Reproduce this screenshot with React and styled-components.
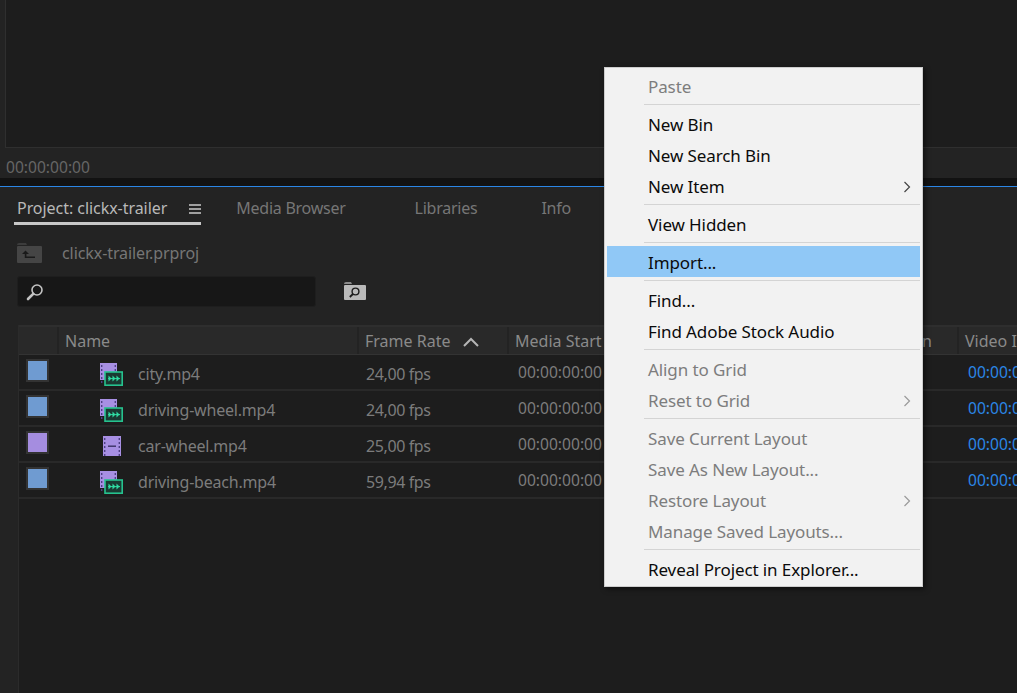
import React from "react";
import styled, { createGlobalStyle } from "styled-components";

const GlobalStyle = createGlobalStyle`
  html, body {
    margin: 0;
    padding: 0;
    background: #1d1d1d;
    overflow: hidden;
  }
  * {
    box-sizing: border-box;
  }
`;

const FONT = `"Noto Sans", "Open Sans", "Liberation Sans", sans-serif`;

const Page = styled.div`
  position: relative;
  width: 1017px;
  height: 693px;
  overflow: hidden;
  background: #232323;
  font-family: ${FONT};
  font-size: 16px;
  color: #8c8c8c;
`;

const Monitor = styled.div`
  height: 178px;
  padding-left: 5px;
  display: flex;
  flex-direction: column;
  background: #232323;
`;

const MonitorFrame = styled.div`
  height: 150px;
  background: #1d1d1d;
  border-left: 1px solid #2f2f2f;
  border-bottom: 1px solid #2f2f2f;
`;

const MonitorTime = styled.div`
  margin-top: 8px;
  padding-left: 1px;
  line-height: 22px;
  font-size: 15.6px;
  color: #666;
`;

const Divider = styled.div`
  height: 9px;
  background: #121212;
  border-bottom: 1px solid #2b86e6;
`;

const Panel = styled.div`
  height: 506px;
  display: flex;
  flex-direction: column;
`;

const Tabs = styled.div`
  height: 40px;
  padding-left: 14px;
  display: flex;
  align-items: flex-start;
`;

const Tab = styled.div`
  height: 38px;
  margin-left: ${(p) => p.$gap || 0}px;
  padding: 10px 0 0 ${(p) => (p.$active ? 3 : 0)}px;
  display: flex;
  line-height: 23px;
  letter-spacing: ${(p) => (p.$active ? -0.05 : -0.25)}px;
  color: ${(p) => (p.$active ? "#b8b8b8" : "#767676")};
  border-bottom: ${(p) => (p.$active ? "3px solid #c8c8c8" : "none")};
`;

const Burger = styled.div`
  width: 12px;
  height: 10px;
  margin: 7px 0 0 22px;
  border-top: 2px solid #a0a0a0;
  border-bottom: 2px solid #a0a0a0;
  position: relative;
  &::after {
    content: "";
    position: absolute;
    left: 0;
    right: 0;
    top: 2px;
    height: 2px;
    background: #a0a0a0;
  }
`;

const PathRow = styled.div`
  height: 40px;
  padding: 12px 0 0 17px;
  display: flex;
  align-items: center;
  gap: 20px;
  letter-spacing: -0.08px;
  color: #767676;
`;

const SearchRow = styled.div`
  height: 49px;
  margin-top: 9px;
  padding-left: 17px;
  display: flex;
  align-items: flex-start;
`;

const SearchBox = styled.div`
  width: 299px;
  height: 31px;
  padding-left: 8px;
  display: flex;
  align-items: center;
  background: #171717;
  border: 1px solid #1e1e1e;
  border-radius: 3px;
`;

const SearchBin = styled.div`
  margin: 6px 0 0 28px;
  display: flex;
`;

const Table = styled.div`
  flex: 1;
  margin-left: 18px;
  background: #1d1d1d;
  border-left: 1px solid #2b2b2b;
  overflow: hidden;
`;

const COLUMNS = "38px 300px 150px 150px 150px 150px 150px";

const HeaderRow = styled.div`
  width: 1100px;
  height: 30px;
  display: grid;
  grid-template-columns: ${COLUMNS};
  background: #292929;
  border-top: 2px solid #2e2e2e;
  border-bottom: 1px solid #333;
`;

const HeaderCell = styled.div`
  padding: 2px 0 0 6px;
  display: flex;
  align-items: center;
  gap: 13px;
  line-height: 27px;
  color: #8a8a8a;
  border-left: ${(p) => (p.$first ? "none" : "2px solid #232323")};
  white-space: nowrap;
  overflow: hidden;
`;

const Row = styled.div`
  width: 1100px;
  height: 36px;
  padding-top: 4px;
  display: grid;
  grid-template-columns: ${COLUMNS};
  align-items: center;
  border-bottom: 2px solid #292929;
`;

const Swatch = styled.div`
  width: 23px;
  height: 23px;
  margin: -7px 0 0 7px;
  background: ${(p) => p.$color};
  border: 2px solid #333;
`;

const NameCell = styled.div`
  padding-left: ${(p) => (p.$single ? 46 : 43)}px;
  display: flex;
  align-items: center;
  gap: ${(p) => (p.$single ? 17 : 15)}px;
  letter-spacing: -0.2px;
  color: #7c7c7c;
`;

const TextCell = styled.div`
  padding-left: 9px;
  letter-spacing: -0.4px;
  color: #7c7c7c;
`;

const TimeCell = styled.div`
  margin-top: -5px;
  padding-left: 11px;
  font-size: 15.6px;
  color: ${(p) => (p.$blue ? "#2b86e6" : "#7c7c7c")};
  white-space: nowrap;
`;

const Menu = styled.div`
  position: absolute;
  left: 604px;
  top: 67px;
  width: 319px;
  height: 520px;
  padding: 2px;
  background: #f2f2f2;
  border: 1px solid #cdcdcd;
  box-shadow: 2px 2px 5px rgba(0, 0, 0, 0.5);
  font-size: 17px;
  letter-spacing: -0.1px;
`;

const MenuItem = styled.div`
  height: 31px;
  padding: 2px 9px 0 41px;
  display: flex;
  align-items: center;
  justify-content: space-between;
  white-space: nowrap;
  color: ${(p) => (p.$disabled ? "#7d7d7d" : "#0b0b0b")};
  background: ${(p) => (p.$active ? "#90c8f6" : "transparent")};
`;

const MenuSep = styled.div`
  height: 7px;
  padding: 3px 0 3px 37px;
  &::after {
    content: "";
    display: block;
    height: 1px;
    background: #d4d4d4;
  }
`;

const Chevron = ({ color }) => (
  <svg width="8" height="12" viewBox="0 0 8 12" fill="none">
    <path d="M1.5 1 L6.5 6 L1.5 11" stroke={color} strokeWidth="1.2" />
  </svg>
);

const UpFolder = () => (
  <svg width="25" height="20" viewBox="0 0 25 20">
    <path d="M0 2 Q0 0 2 0 H9 L10 2 H0Z" fill="#3c3c3c" />
    <rect x="0" y="3" width="25" height="17" rx="1" fill="#454545" />
    <path d="M5 11 L8.5 7.5 L12 11 H9.4 V13.6 H18 V15 H7.8 V11Z" fill="#1a1a1a" />
  </svg>
);

const SearchIcon = () => (
  <svg width="18" height="18" viewBox="0 0 18 18" fill="none">
    <circle cx="11" cy="7" r="5" stroke="#c4c4c4" strokeWidth="1.6" />
    <path d="M7.2 10.8 L2 16" stroke="#c4c4c4" strokeWidth="2.6" strokeLinecap="round" />
  </svg>
);

const SearchBinIcon = () => (
  <svg width="22" height="18" viewBox="0 0 22 18">
    <path d="M0 2 Q0 0 2 0 H7 L8 2Z" fill="#8a8a8a" />
    <rect x="0" y="3" width="22" height="15" rx="1" fill="#b9b9b9" />
    <circle cx="11.5" cy="9.5" r="3.4" fill="none" stroke="#1c1c1c" strokeWidth="1.4" />
    <path d="M9 12 L5.8 15" stroke="#1c1c1c" strokeWidth="1.8" />
  </svg>
);

// filmstrip holes down both edges of the clip icon
const Strip = ({ x }) => (
  <>
    {[2, 6, 10, 14, 18].map((y) => (
      <rect key={y} x={x} y={y} width="1.4" height="2" fill="#4e3f86" />
    ))}
  </>
);

const VideoClip = () => (
  <svg width="18" height="20" viewBox="0 0 18 20">
    <rect width="18" height="20" fill="#a78fe3" />
    <Strip x={1} />
    <Strip x={15.6} />
    <rect x="5" y="9.5" width="8" height="1.4" fill="#3b3165" />
  </svg>
);

const AvClip = () => (
  <svg width="23" height="23" viewBox="0 0 23 23">
    <rect width="17" height="17" fill="#a78fe3" />
    <Strip x={1} />
    <Strip x={14.6} />
    <rect x="5" y="9" width="17.2" height="13.2" fill="#1a3a32" stroke="#26c28e" strokeWidth="1.6" />
    <path d="M8 15.6 H20" stroke="#2fdca2" strokeWidth="1" />
    <path
      d="M8.5 12.5 V18.5 L11.5 15.5Z M12.5 12.5 V18.5 L15.5 15.5Z M16.5 12.5 V18.5 L19.5 15.5Z"
      fill="#2fdca2"
    />
  </svg>
);

const SortArrow = () => (
  <svg width="16" height="10" viewBox="0 0 16 10" fill="none">
    <path d="M1 9 L8 2 L15 9" stroke="#b5b5b5" strokeWidth="2" />
  </svg>
);

const clips = [
  { name: "city.mp4", fps: "24,00 fps", color: "#6f9bd1" },
  { name: "driving-wheel.mp4", fps: "24,00 fps", color: "#6f9bd1" },
  { name: "car-wheel.mp4", fps: "25,00 fps", color: "#a58de0", single: true },
  { name: "driving-beach.mp4", fps: "59,94 fps", color: "#6f9bd1" },
];

const menu = [
  { label: "Paste", disabled: true },
  "sep",
  { label: "New Bin" },
  { label: "New Search Bin" },
  { label: "New Item", arrow: true },
  "sep",
  { label: "View Hidden" },
  "sep",
  { label: "Import...", active: true },
  "sep",
  { label: "Find..." },
  { label: "Find Adobe Stock Audio" },
  "sep",
  { label: "Align to Grid", disabled: true },
  { label: "Reset to Grid", disabled: true, arrow: true },
  "sep",
  { label: "Save Current Layout", disabled: true },
  { label: "Save As New Layout...", disabled: true },
  { label: "Restore Layout", disabled: true, arrow: true },
  { label: "Manage Saved Layouts...", disabled: true },
  "sep",
  { label: "Reveal Project in Explorer..." },
];

export default function App() {
  return (
    <Page>
      <GlobalStyle />
      <Monitor>
        <MonitorFrame />
        <MonitorTime>00:00:00:00</MonitorTime>
      </Monitor>
      <Divider />
      <Panel>
        <Tabs>
          <Tab $active>
            Project: clickx-trailer
            <Burger />
          </Tab>
          <Tab $gap={35}>Media Browser</Tab>
          <Tab $gap={69}>Libraries</Tab>
          <Tab $gap={64}>Info</Tab>
        </Tabs>
        <PathRow>
          <UpFolder />
          clickx-trailer.prproj
        </PathRow>
        <SearchRow>
          <SearchBox>
            <SearchIcon />
          </SearchBox>
          <SearchBin>
            <SearchBinIcon />
          </SearchBin>
        </SearchRow>
        <Table>
          <HeaderRow>
            <HeaderCell $first />
            <HeaderCell>Name</HeaderCell>
            <HeaderCell>
              Frame Rate
              <SortArrow />
            </HeaderCell>
            <HeaderCell>Media Start</HeaderCell>
            <HeaderCell>Media End</HeaderCell>
            <HeaderCell>Media Duration</HeaderCell>
            <HeaderCell>Video In Point</HeaderCell>
          </HeaderRow>
          {clips.map((clip) => (
            <Row key={clip.name}>
              <Swatch $color={clip.color} />
              <NameCell $single={clip.single}>
                {clip.single ? <VideoClip /> : <AvClip />}
                {clip.name}
              </NameCell>
              <TextCell>{clip.fps}</TextCell>
              <TimeCell>00:00:00:00</TimeCell>
              <TimeCell />
              <TimeCell />
              <TimeCell $blue>00:00:00:00</TimeCell>
            </Row>
          ))}
        </Table>
      </Panel>
      <Menu>
        {menu.map((item, i) =>
          item === "sep" ? (
            <MenuSep key={i} />
          ) : (
            <MenuItem key={i} $disabled={item.disabled} $active={item.active}>
              {item.label}
              {item.arrow && <Chevron color={item.disabled ? "#9a9a9a" : "#444"} />}
            </MenuItem>
          )
        )}
      </Menu>
    </Page>
  );
}
